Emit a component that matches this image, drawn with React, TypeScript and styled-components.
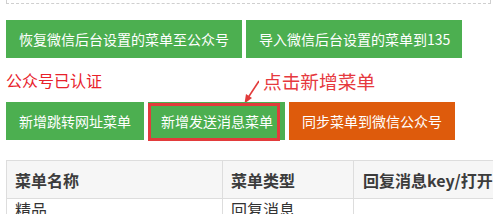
import React from "react";
import styled, { createGlobalStyle } from "styled-components";

const Global = createGlobalStyle`
  html, body { margin: 0; padding: 0; overflow: hidden; background: #fff; }
  body { font-family: "Noto Sans CJK SC", "Noto Sans", sans-serif; }
`;

const Page = styled.div`
  padding: 0 0 0 6px;
  width: 700px;
`;

const TopBox = styled.div`
  width: 483px;
  height: 3px;
  border: 1px dashed #cfcfcf;
  border-top: none;
`;

const ButtonRow = styled.div<{ $top: number }>`
  display: flex;
  gap: 4px;
  margin-top: ${(p) => p.$top}px;
`;

const Button = styled.button<{ $tone?: "green" | "orange"; $pr?: number }>`
  height: 38px;
  padding: 0 ${(p) => p.$pr ?? 13}px 0 13px;
  border: none;
  margin: 0;
  background: ${(p) => (p.$tone === "orange" ? "#de5b0c" : "#4caf50")};
  color: #fff;
  font-family: "Noto Sans CJK SC", "Noto Sans", sans-serif;
  font-size: 14px;
  line-height: 38px;
  white-space: nowrap;
  cursor: pointer;
`;

const LabelRow = styled.div`
  position: relative;
  height: 44px;
  display: flex;
  align-items: center;
`;

const Label = styled.span`
  color: #e8212b;
  font-size: 16px;
  line-height: 16px;
`;

const Annotation = styled.span`
  position: absolute;
  left: 257px;
  top: 14px;
  color: #e6393e;
  font-size: 18.7px;
  line-height: 1;
  white-space: nowrap;
`;

const Arrow = styled.svg`
  position: absolute;
  left: 223px;
  top: 20px;
`;

const HighlightWrap = styled.div`
  position: relative;
  display: flex;
`;

const Highlight = styled.div`
  position: absolute;
  left: 0;
  top: 1px;
  width: 132px;
  height: 38px;
  box-sizing: border-box;
  border: 3px solid #e23b3b;
  pointer-events: none;
`;

const Table = styled.table`
  margin-top: 20px;
  border-collapse: collapse;
  width: 640px;
  table-layout: fixed;
`;

const Th = styled.th<{ $w: number; $pl?: number }>`
  width: ${(p) => p.$w}px;
  height: 38px;
  padding: 0 8px 0 ${(p) => p.$pl ?? 8}px;
  box-sizing: border-box;
  background: #f6f6f6;
  border: 1px solid #dddddd;
  text-align: left;
  font-size: 16px;
  font-weight: bold;
  color: #3c3c3c;
  white-space: nowrap;
  overflow: hidden;
`;

const Td = styled.td<{ $pl?: number }>`
  padding: 1px 8px 12px ${(p) => p.$pl ?? 8}px;
  border: 1px solid #dddddd;
  font-size: 16px;
  line-height: 18px;
  color: #333;
  white-space: nowrap;
`;

export default function App() {
  return (
    <>
      <Global />
      <Page>
        <TopBox />
        <ButtonRow $top={16}>
          <Button>恢复微信后台设置的菜单至公众号</Button>
          <Button $pr={12}>导入微信后台设置的菜单到135</Button>
        </ButtonRow>
        <LabelRow>
          <Label>公众号已认证</Label>
          <Annotation>点击新增菜单</Annotation>
          <Arrow width="30" height="30" viewBox="0 0 30 30">
            <line x1="30" y1="3" x2="19.5" y2="19" stroke="#e23b3b" strokeWidth="1.6" />
            <polygon points="15.5,25.5 17,16 23,20" fill="#e23b3b" />
          </Arrow>
        </LabelRow>
        <ButtonRow $top={0}>
          <Button>新增跳转网址菜单</Button>
          <HighlightWrap>
            <Button $pr={12}>新增发送消息菜单</Button>
            <Highlight />
          </HighlightWrap>
          <Button $tone="orange">同步菜单到微信公众号</Button>
        </ButtonRow>
        <Table>
          <thead>
            <tr>
              <Th $w={216}>菜单名称</Th>
              <Th $w={131}>菜单类型</Th>
              <Th $w={293} $pl={9}>回复消息key/打开网址</Th>
            </tr>
          </thead>
          <tbody>
            <tr>
              <Td>精品</Td>
              <Td>回复消息</Td>
              <Td $pl={9}></Td>
            </tr>
          </tbody>
        </Table>
      </Page>
    </>
  );
}
